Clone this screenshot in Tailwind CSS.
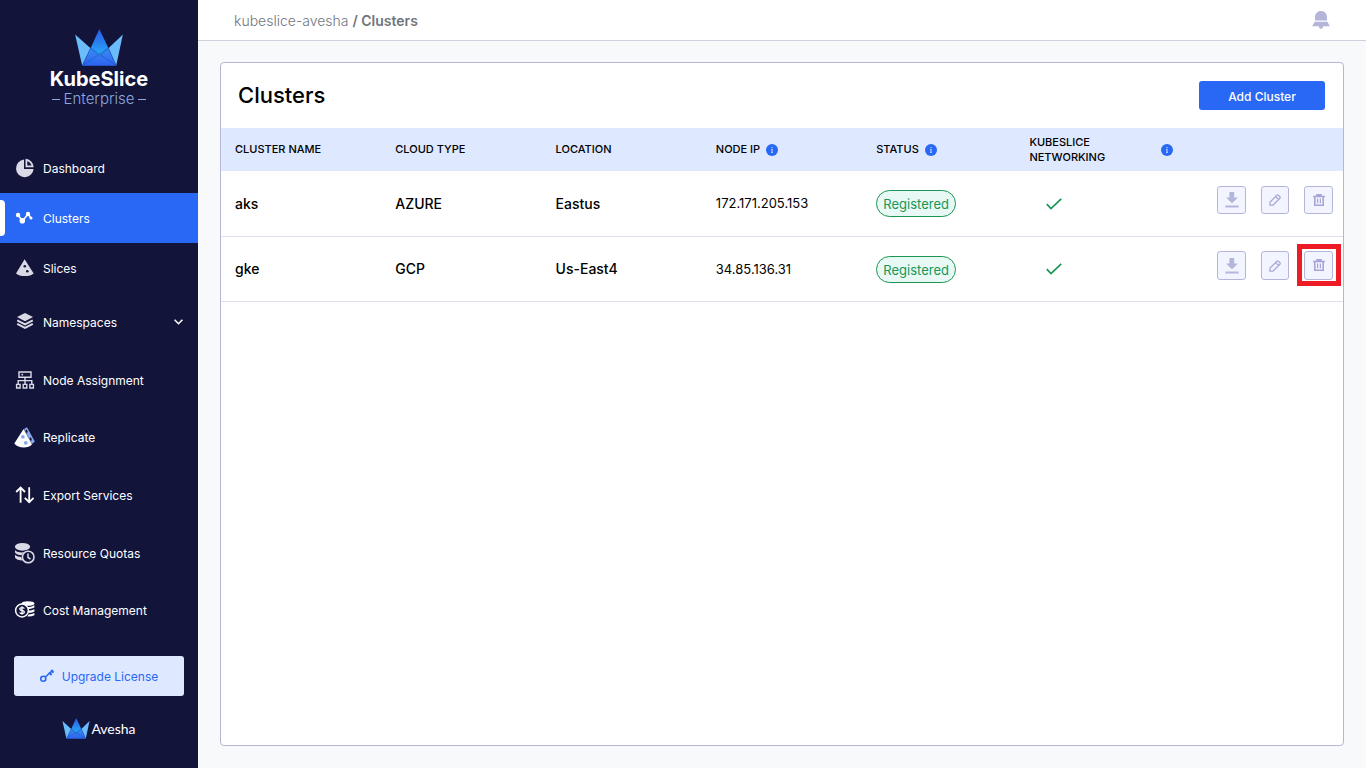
<!DOCTYPE html>
<html lang="en">
<head>
  <meta charset="UTF-8" />
  <meta name="viewport" content="width=device-width, initial-scale=1.0" />
  <title>KubeSlice Enterprise - Clusters</title>
  <script src="https://cdn.jsdelivr.net/npm/@tailwindcss/browser@4"></script>
</head>
<body class="flex min-h-screen bg-[#f8f9fb] font-['Inter',sans-serif] text-black">

  <!-- Shared icons -->
  <svg class="absolute size-0" aria-hidden="true">
    <defs>
      <linearGradient id="peak" x1="0" y1="0" x2="0" y2="1">
        <stop offset="0" stop-color="#2a56e6" />
        <stop offset=".85" stop-color="#27a2f6" />
      </linearGradient>
      <linearGradient id="base" x1="0" y1="0" x2="0" y2="1">
        <stop offset="0" stop-color="#3c8df5" />
        <stop offset="1" stop-color="#2b63ee" />
      </linearGradient>
    </defs>
    <symbol id="crown" viewBox="0 0 142 110">
      <path fill="#6bbcfb" d="M0 16 46 57 21 109ZM142 16 99 57 122 109Z" />
      <path fill="url(#peak)" d="M72 0 99 57 72 82 46 57Z" />
      <path fill="url(#base)" d="M46 57 72 82 99 57 122 109H21Z" />
      <path fill="none" stroke="#1e55c8" stroke-width="2" d="M46 57 122 109M99 57 21 109M46 57 21 109M99 57 122 109" />
    </symbol>
    <symbol id="info" viewBox="0 0 12 12">
      <circle cx="6" cy="6" r="6" fill="#2968f5" />
      <path fill="#b9cffc" d="M5.4 3h1.2v1.2H5.4zM5 5h1.6v3.2H7V9H5v-.8h.4V5.8H5z" />
    </symbol>
    <symbol id="check" viewBox="0 0 16 12">
      <path fill="none" stroke="#199653" stroke-width="1.7" d="M.8 6.2 5 10.6 15.2.9" />
    </symbol>
    <symbol id="download" viewBox="0 0 14 16">
      <path fill="#b5b5da" d="M4.4 0h4.8v5.4H13L7 11.3 1 5.4h3.4zM.4 13.4h13.2v2H.4z" />
    </symbol>
    <symbol id="pencil" viewBox="0 0 12 12">
      <path fill="none" stroke="#a9a9d6" stroke-width="1.3" stroke-linejoin="round" d="M.8 11.2 1.1 8 7.9 1.2Q8.6.5 9.3 1.2L10.9 2.8Q11.6 3.5 10.9 4.2L4.1 11ZM6.6 2.6 9.5 5.5" />
    </symbol>
    <symbol id="trash" viewBox="0 0 12 13">
      <path fill="none" stroke="#a5a5d6" stroke-width="1.6" d="M0 2.5h12M4 2.3V.9h4v1.4M1.8 2.5v8.7h8.4V2.5" />
      <path fill="none" stroke="#a5a5d6" stroke-width="1.2" d="M4.6 4.5v4.8M7.4 4.5v4.8" />
    </symbol>
  </svg>

  <!-- Sidebar -->
  <aside class="flex w-[198px] shrink-0 flex-col bg-[#12143a] text-white">
    <div class="flex h-[143px] flex-col items-center pt-[29px]">
      <svg class="h-[37px] w-12"><use href="#crown" /></svg>
      <div class="mt-[2px] text-xl leading-[22px] font-bold">KubeSlice</div>
      <div class="flex items-center gap-1 text-[15px] leading-[18px] font-light text-[#8fa9de]">
        <span class="h-px w-2 bg-[#8fa9de]"></span>Enterprise<span class="h-px w-2 bg-[#8fa9de]"></span>
      </div>
    </div>

    <nav class="flex flex-1 flex-col text-xs">
      <a href="#" class="flex h-[50px] items-center gap-2 pl-[15px]">
        <svg class="size-5" viewBox="0 0 20 20" fill="#dadae6">
          <path d="M9 1.6V11h9.6A8.8 8.8 0 1 1 9 1.6Z" />
          <path fill-rule="evenodd" d="M10.5.8a8.8 8.8 0 0 1 8.2 8.5h-8.2zm1.8 2.1v4.6h4.3a7 7 0 0 0-4.3-4.6Z" />
        </svg>
        <span class="pt-0.5">Dashboard</span>
      </a>
      <a href="#" class="relative flex h-[50px] items-center gap-2 bg-[#2968f5] pl-[15px]">
        <span class="absolute top-[7px] left-0 h-9 w-[5px] rounded-r bg-white"></span>
        <svg class="size-5" viewBox="1 0 20 20">
          <path fill="none" stroke="#fff" stroke-width="1.5" d="M4 7 8.5 13 14 6 17 10" />
          <g fill="#fff"><circle cx="4" cy="7" r="2.2" /><circle cx="8.3" cy="12.8" r="2.8" /><circle cx="14" cy="6" r="2.2" /><circle cx="17" cy="10" r="1.5" /></g>
        </svg>
        <span class="pt-0.5">Clusters</span>
      </a>
      <a href="#" class="flex h-[50px] items-center gap-2 pl-[15px]">
        <svg class="size-5" viewBox="0 0 20 20">
          <path fill="#dadae6" d="M9.6 1.3 18.7 15.5C15.5 18.9 4.3 18.9 1 15.5Z" />
          <g fill="#12143a"><circle cx="9.8" cy="8.3" r="1.3" /><circle cx="12.3" cy="13.3" r="1.3" /></g>
        </svg>
        <span class="pt-0.5">Slices</span>
      </a>
      <a href="#" class="flex flex-1 items-center gap-2 pl-[15px]">
        <svg class="size-5" viewBox="0 0 20 20">
          <path fill="#dadae6" d="M10 1 18 5 10 9.2 2 5Z" />
          <path fill="none" stroke="#dadae6" stroke-width="1.9" d="M2.2 8.3 10 12.4 17.8 8.3M2.2 11.8 10 15.9 17.8 11.8" />
        </svg>
        <span class="pt-0.5">Namespaces</span>
        <svg class="mr-[15px] ml-auto h-[6px] w-[9px]" viewBox="0 0 9 6"><path fill="none" stroke="#fff" stroke-width="1.6" d="M.6.8 4.5 4.7 8.4.8" /></svg>
      </a>
      <a href="#" class="flex flex-1 items-center gap-2 pl-[15px]">
        <svg class="size-5" viewBox="0 0 20 20" fill="none" stroke="#dadae6" stroke-width="1.4">
          <path d="M4 2h12v5.2H4zM10 7.2V14M3.2 14v-3.4h13.6V14M1.6 14.4h3.5V18H1.6zM8.2 14.4h3.6V18H8.2zM14.9 14.4h3.5V18h-3.5z" />
          <path d="M6.5 4.6h1.6" stroke-width="1.6" />
        </svg>
        <span class="pt-0.5">Node Assignment</span>
      </a>
      <a href="#" class="flex flex-1 items-center gap-2 pl-[14px]">
        <svg class="h-[21px] w-[21px]" viewBox="0 0 21 21">
          <path fill="#86a9f2" d="M10 2 13 .2 20.8 14.5 18 17Z" />
          <path fill="#12143a" d="m12.5 2.2 1.3 2.6-1 1.5-1.5-2zM15.5 10.5l1.8.3.5 3-1.6-.5z" />
          <path fill="#fff" d="M9.6 2 18 17.5C14.5 21.5 4 21.5 .3 16.5Z" />
          <g fill="#86a9f2"><circle cx="8.8" cy="9.8" r="1.9" /><circle cx="11.8" cy="15.8" r="1.9" /></g>
        </svg>
        <span class="pt-0.5">Replicate</span>
      </a>
      <a href="#" class="flex flex-1 items-center gap-2 pl-[15px]">
        <svg class="size-5" viewBox="0 0 20 20" fill="none" stroke="#fff" stroke-width="1.8">
          <path d="M5.6 17.8V3M1.2 7 5.6 2.6 10 7M14.2 2.2V17M9.8 12.8 14.2 17.2 18.6 12.8" />
        </svg>
        <span class="pt-0.5">Export Services</span>
      </a>
      <a href="#" class="flex flex-1 items-center gap-2 pl-[15px]">
        <svg class="size-5 overflow-visible" viewBox="0 0 20 20">
          <g fill="#dadae6">
            <ellipse cx="7.5" cy="3.8" rx="7.6" ry="3.9" />
            <path d="M0 7.2C2.5 9.6 7 9.8 10 9 8.3 9.7 7.2 10.8 6.7 12.3 3.5 12 .8 11 0 9.4ZM0 11.8C1.6 13.4 3.8 14 6.3 14 6.4 15.4 6.9 16.6 7.7 17.6 4 17.5.8 16.6 0 14.6Z" />
          </g>
          <circle cx="13.2" cy="14" r="5.8" fill="#12143a" stroke="#dadae6" stroke-width="1.6" />
          <path fill="none" stroke="#dadae6" stroke-width="1.5" d="M13 10.5V14.5L15.5 16" />
        </svg>
        <span class="pt-0.5">Resource Quotas</span>
      </a>
      <a href="#" class="flex flex-1 items-center gap-2 pl-[15px]">
        <svg class="size-5 overflow-visible" viewBox="0 0 20 20">
          <g fill="#fff">
            <ellipse cx="13" cy="3.5" rx="6.4" ry="2.3" />
            <path d="M12 7.2Q16.5 7 19.4 5.2V7.6Q17 9 13.2 9.2ZM13.6 10.8Q17 10.6 19.4 9.2V11.6Q17.3 12.8 13.8 13ZM13.6 14.5Q17 14.3 19.4 13V15.2Q16.8 16.7 12.4 16.6Z" />
          </g>
          <circle cx="7" cy="10.5" r="6.4" fill="#12143a" stroke="#fff" stroke-width="1.5" />
          <path fill="none" stroke="#fff" stroke-width="1.3" d="M9.3 8.6Q9 7.6 7 7.6 4.8 7.6 4.8 9.1 4.8 10.4 7 10.5 9.3 10.7 9.3 12 9.3 13.5 7 13.5 5 13.5 4.7 12.3M7 6.2V14.8" />
        </svg>
        <span class="pt-0.5">Cost Management</span>
      </a>
    </nav>

    <div class="flex h-[129px] flex-col items-center px-[14px] pt-[17px]">
      <button type="button" class="flex h-10 w-full items-center justify-center gap-2 rounded-[3px] bg-[#dee8ff] text-xs text-[#2968f5]">
        <svg class="size-[14px]" viewBox="0 0 14 14" fill="none" stroke="#2968f5">
          <circle cx="3.3" cy="9.8" r="2.5" stroke-width="1.6" />
          <path stroke-width="1.6" d="M5.3 8 13 1.2" />
          <path stroke-width="2" d="M9.2 3.4 11.6 6M11.2 1.2 13.4 3.7" />
        </svg>
        <span class="pt-0.5">Upgrade License</span>
      </button>
      <div class="mt-[22px] flex items-center gap-px font-['Lato',sans-serif] text-sm leading-[21px]">
        <svg class="h-[21px] w-7"><use href="#crown" /></svg>
        Avesha
      </div>
    </div>
  </aside>

  <div class="flex min-w-0 flex-1 flex-col">
    <!-- Top bar -->
    <header class="flex h-[41px] items-center justify-between border-b border-[#d0d0dc] bg-white px-9 text-sm text-[#6f757d]">
      <div class="pt-0.5"><a href="#" class="font-light">kubeslice-avesha</a> <span class="font-semibold">/ Clusters</span></div>
      <button type="button" aria-label="Notifications">
        <svg class="h-[18px] w-[18px]" viewBox="0 0 18 18" fill="#b5b5d9">
          <path d="M3 9.6V6.5C3 2.5 5.5 0 9 0s6 2.5 6 6.5v3.1zM2.6 10.8h12.8L17.8 15.2H11.2Q10.8 18 9 18T6.8 15.2H.2Z" />
        </svg>
      </button>
    </header>

    <main class="m-[22px] mt-[21px] flex-1 rounded-[4px] border border-[#b5b5d9] bg-white">
      <div class="flex h-[65px] items-center justify-between pr-[18px] pl-[17px]">
        <h1 class="text-[22px] font-medium">Clusters</h1>
        <button type="button" class="h-[29px] w-[126px] rounded-[3px] bg-[#2968f5] pt-0.5 text-xs font-medium text-white">Add Cluster</button>
      </div>

      <table class="w-full table-fixed border-separate border-spacing-0 text-left text-sm">
        <thead class="bg-[#dee8ff] text-[11px] leading-[15px]">
          <tr class="h-[43px]">
            <th class="px-[14px] font-medium">CLUSTER NAME</th>
            <th class="px-[14px] font-medium">CLOUD TYPE</th>
            <th class="px-[14px] font-medium">LOCATION</th>
            <th class="px-[14px] font-medium"><div class="flex items-center gap-[6px]">NODE IP <svg class="size-3"><use href="#info" /></svg></div></th>
            <th class="px-[14px] font-medium"><div class="flex items-center gap-[6px]">STATUS <svg class="size-3"><use href="#info" /></svg></div></th>
            <th class="pr-[10px] pl-[7px] font-medium"><div class="flex items-center justify-between"><span>KUBESLICE<br>NETWORKING</span> <svg class="size-3"><use href="#info" /></svg></div></th>
            <th aria-label="Actions"></th>
          </tr>
        </thead>
        <tbody>
          <tr class="h-[66px]">
            <td class="border-b border-[#dae0ee] px-[14px] font-medium">aks</td>
            <td class="border-b border-[#dae0ee] px-[14px] font-medium">AZURE</td>
            <td class="border-b border-[#dae0ee] px-[14px] font-medium">Eastus</td>
            <td class="border-b border-[#dae0ee] px-[14px] text-[13px]">172.171.205.153</td>
            <td class="border-b border-[#dae0ee] px-[14px]"><span class="flex h-[27px] w-20 items-center justify-center rounded-full border border-[#199653] bg-[#e8f8f5] pt-0.5 text-[13px] text-[#199653]">Registered</span></td>
            <td class="border-b border-[#dae0ee] pl-6"><svg class="h-3 w-4" role="img" aria-label="Enabled"><use href="#check" /></svg></td>
            <td class="border-b border-[#dae0ee] pt-[15px] pr-[10px] align-top">
              <div class="flex justify-end gap-[15px]">
                <button type="button" aria-label="Download" class="flex h-7 w-[29px] items-center justify-center rounded-[3px] border border-[#b5b5d9] bg-[#f2f5ff]"><svg class="h-4 w-[14px]"><use href="#download" /></svg></button>
                <button type="button" aria-label="Edit" class="flex size-7 items-center justify-center rounded-[3px] border border-[#b5b5d9] bg-[#f2f5ff]"><svg class="size-3"><use href="#pencil" /></svg></button>
                <button type="button" aria-label="Delete" class="flex h-7 w-[29px] items-center justify-center rounded-[3px] border border-[#b5b5d9] bg-[#f2f5ff]"><svg class="h-[13px] w-3"><use href="#trash" /></svg></button>
              </div>
            </td>
          </tr>
          <tr class="h-[65px]">
            <td class="border-b border-[#dae0ee] px-[14px] font-medium">gke</td>
            <td class="border-b border-[#dae0ee] px-[14px] font-medium">GCP</td>
            <td class="border-b border-[#dae0ee] px-[14px] font-medium">Us-East4</td>
            <td class="border-b border-[#dae0ee] px-[14px] text-[13px]">34.85.136.31</td>
            <td class="border-b border-[#dae0ee] px-[14px]"><span class="flex h-[27px] w-20 items-center justify-center rounded-full border border-[#199653] bg-[#e8f8f5] pt-0.5 text-[13px] text-[#199653]">Registered</span></td>
            <td class="border-b border-[#dae0ee] pl-6"><svg class="h-3 w-4" role="img" aria-label="Enabled"><use href="#check" /></svg></td>
            <td class="border-b border-[#dae0ee] pt-[14px] pr-[10px] align-top">
              <div class="flex justify-end gap-[15px]">
                <button type="button" aria-label="Download" class="flex h-[29px] w-[29px] items-center justify-center rounded-[3px] border border-[#b5b5d9] bg-[#f2f5ff]"><svg class="h-4 w-[14px]"><use href="#download" /></svg></button>
                <button type="button" aria-label="Edit" class="flex h-[29px] w-7 items-center justify-center rounded-[3px] border border-[#b5b5d9] bg-[#f2f5ff]"><svg class="size-3"><use href="#pencil" /></svg></button>
                <button type="button" aria-label="Delete" class="relative flex h-[29px] w-[29px] items-center justify-center rounded-[3px] border border-[#b5b5d9] bg-[#f2f5ff]">
                  <svg class="h-[13px] w-3"><use href="#trash" /></svg>
                  <span class="absolute -top-2 -right-[9px] -bottom-[7px] -left-2 border-5 border-[#ed1c24]"></span>
                </button>
              </div>
            </td>
          </tr>
        </tbody>
      </table>
    </main>
  </div>
</body>
</html>
